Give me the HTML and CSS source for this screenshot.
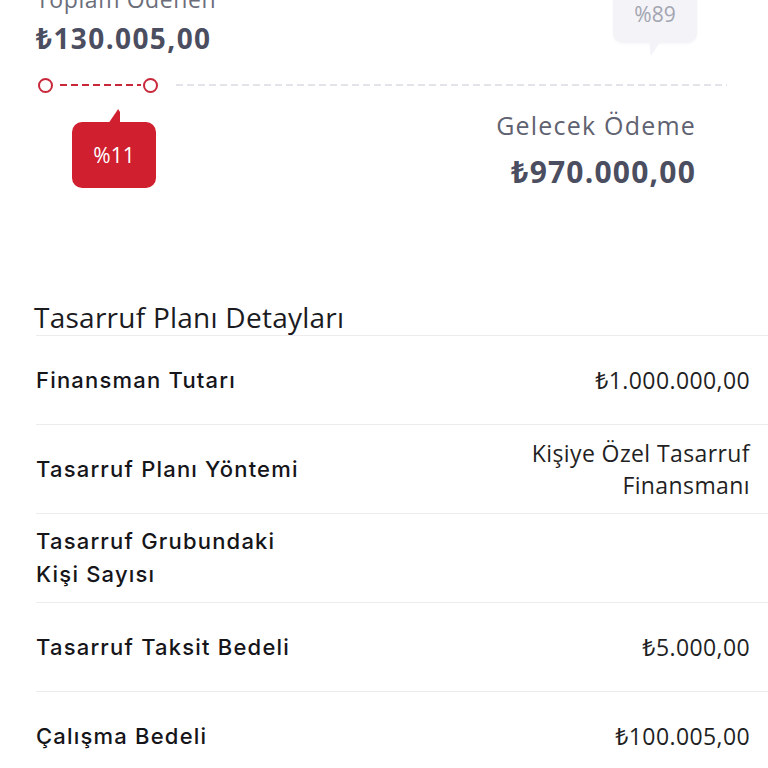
FILE: index.html
```html
<!DOCTYPE html>
<html lang="tr">
<head>
    <meta charset="UTF-8">
    <meta name="viewport" content="width=device-width, initial-scale=1.0">
    <title>Tasarruf Planı</title>
    <link rel="stylesheet" href="styles.css">
</head>
<body>
    <div class="summary">
        <div class="paid-label">Toplam Ödenen</div>
        <div class="paid-amount">₺130.005,00</div>

        <div class="bubble bubble-muted">%89</div>

        <div class="track">
            <span class="dot"></span>
            <span class="dash-red"></span>
            <span class="dot"></span>
            <span class="dash-gray"></span>
        </div>

        <div class="lower">
            <div class="bubble bubble-red">%11</div>
            <div class="future">
                <div class="future-label">Gelecek Ödeme</div>
                <div class="future-amount">₺970.000,00</div>
            </div>
        </div>
    </div>

    <div class="details">
        <div class="details-title">Tasarruf Planı Detayları</div>
        <div class="detail-row">
            <div class="detail-label">Finansman Tutarı</div>
            <div class="detail-value">₺1.000.000,00</div>
        </div>
        <div class="detail-row">
            <div class="detail-label">Tasarruf Planı Yöntemi</div>
            <div class="detail-value">Kişiye Özel Tasarruf<br>Finansmanı</div>
        </div>
        <div class="detail-row">
            <div class="detail-label">Tasarruf Grubundaki<br>Kişi Sayısı</div>
            <div class="detail-value"></div>
        </div>
        <div class="detail-row">
            <div class="detail-label">Tasarruf Taksit Bedeli</div>
            <div class="detail-value">₺5.000,00</div>
        </div>
        <div class="detail-row">
            <div class="detail-label">Çalışma Bedeli</div>
            <div class="detail-value">₺100.005,00</div>
        </div>
    </div>
</body>
</html>
```

FILE: styles.css
```css
body {
    font-family: 'Open Sans', 'Noto Sans', 'DejaVu Sans', sans-serif;
    margin: 0;
    background-color: #ffffff;
    color: #1b1b1f;
    overflow: hidden;
}
.summary {
    position: relative;
    margin-top: -16px;
    padding: 0 72px 0 36px;
}
.paid-label {
    font-size: 23px;
    line-height: 30px;
    letter-spacing: 0.6px;
    color: #6b6e7a;
}
.paid-amount {
    font-size: 28px;
    font-weight: 700;
    line-height: 36px;
    letter-spacing: 1.4px;
    color: #4b4e60;
    margin-top: 6px;
}
.track {
    display: flex;
    align-items: center;
    height: 20px;
    margin-top: 19px;
    margin-right: -31px;
    margin-left: 2px;
}
.dot {
    width: 11px;
    height: 11px;
    border: 2px solid #c8283a;
    border-radius: 50%;
    flex-shrink: 0;
}
.dash-red {
    width: 81px;
    height: 2px;
    margin: 0 2px 0 7px;
    background: repeating-linear-gradient(90deg, #c8283a 0 7px, transparent 7px 11px);
}
.dash-gray {
    flex: 1;
    height: 2px;
    margin-left: 18px;
    background: repeating-linear-gradient(90deg, #e3e4e9 0 7px, transparent 7px 11px);
}
.bubble {
    position: relative;
    width: 84px;
    height: 66px;
    border-radius: 10px;
    display: flex;
    align-items: center;
    justify-content: center;
    font-size: 21px;
}
.bubble::before {
    content: "";
    position: absolute;
    width: 12px;
    height: 15px;
}
.bubble-red {
    background-color: #d0202f;
    color: #ffffff;
    margin-left: 36px;
    margin-top: 27px;
}
.bubble-red::before {
    background-color: #d0202f;
    top: -13px;
    left: 36px;
    clip-path: polygon(85% 0, 100% 20%, 100% 100%, 0 100%);
    border-radius: 2px;
}
.bubble-muted {
    position: absolute;
    top: -7px;
    left: 613px;
    padding-top: 8px;
    box-sizing: border-box;
    background-color: #f3f3f8;
    color: #a3a5b1;
    box-shadow: 0 1px 3px rgba(0,0,0,0.04);
}
.bubble-muted::before {
    background-color: #f3f3f8;
    bottom: -13px;
    left: 36px;
    clip-path: polygon(0 0, 100% 0, 15% 100%);
}
.lower {
    display: flex;
    justify-content: space-between;
    align-items: flex-start;
}
.future {
    text-align: right;
    margin-top: 15px;
}
.future-label {
    font-size: 25px;
    line-height: 30px;
    letter-spacing: 1.2px;
    color: #5f6270;
}
.future-amount {
    font-size: 30px;
    font-weight: 700;
    line-height: 36px;
    letter-spacing: 1.2px;
    color: #4b4e60;
    margin-top: 14px;
}
.details {
    margin-top: 109px;
    padding-left: 36px;
}
.details-title {
    font-size: 28px;
    line-height: 36px;
    letter-spacing: 0.25px;
    color: #1b1b1f;
    margin-left: -2px;
}
.detail-row {
    display: flex;
    justify-content: space-between;
    align-items: center;
    height: 88px;
    padding-right: 18px;
    border-top: 1px solid #ececee;
}
.detail-label {
    font-family: Inter, 'Open Sans', sans-serif;
    font-size: 22px;
    font-weight: 500;
    line-height: 33px;
    letter-spacing: 1.2px;
    color: #15151a;
}
.detail-value {
    font-size: 23px;
    line-height: 32px;
    letter-spacing: 0.4px;
    text-align: right;
    color: #1f1f24;
}
```
